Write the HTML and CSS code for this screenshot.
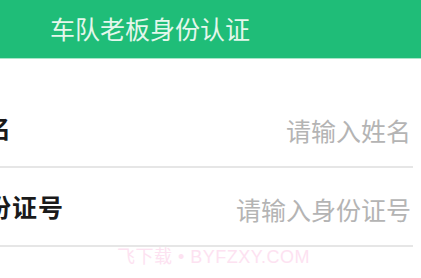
FILE: index.html
```html
<!DOCTYPE html>
<html lang="zh-CN">
<head>
<meta charset="utf-8">
<link rel="stylesheet" href="styles.css">
</head>
<body>
<header class="topbar">
  <h1 class="title">车队老板身份认证</h1>
</header>
<main class="form">
  <div class="row">
    <span class="label">姓名</span>
    <input class="field" type="text" placeholder="请输入姓名">
  </div>
  <div class="row">
    <span class="label">身份证号</span>
    <input class="field" type="text" placeholder="请输入身份证号">
  </div>
  <div class="watermark">飞下载 • BYFZXY.COM</div>
</main>
</body>
</html>
```
FILE: styles.css
```css
html, body {
  margin: 0;
  padding: 0;
  background: #ffffff;
  overflow: hidden;
}
body {
  font-family: "Noto Sans CJK SC", "Noto Sans", sans-serif;
  width: 421px;
  height: 278px;
}
.topbar {
  height: 58px;
  background: #1fbd78;
  border-bottom: 1px solid #a8e6c8;
  display: flex;
  align-items: center;
  padding-left: 50px;
}
.title {
  margin: 0;
  font-size: 25px;
  font-weight: 400;
  color: #e4f7ec;
  line-height: 1;
  margin-top: -2px;
}
.form {
  position: relative;
  margin-top: 30px;
  margin-left: -40px;
  margin-right: 8px;
}
.row {
  height: 77px;
  border-bottom: 2px solid #e6e6e6;
  display: flex;
  align-items: center;
}
.label {
  font-size: 25px;
  letter-spacing: 1px;
  color: #1a1a1a;
  font-weight: 700;
  white-space: nowrap;
  margin-top: -2px;
}
.field {
  flex: 1;
  min-width: 0;
  border: none;
  outline: none;
  background: transparent;
  text-align: right;
  font-family: "Noto Sans CJK SC", "Noto Sans", sans-serif;
  font-size: 25px;
  color: #333333;
  padding: 0 2px 0 0;
  margin-top: 4px;
}
.field::placeholder {
  color: #b4b4b4;
}
.watermark {
  position: absolute;
  left: 157px;
  top: 158px;
  font-family: "Liberation Sans", "Noto Sans CJK SC", sans-serif;
  font-size: 18px;
  letter-spacing: 0.5px;
  line-height: 20px;
  color: #fde2f1;
  white-space: nowrap;
}
```
